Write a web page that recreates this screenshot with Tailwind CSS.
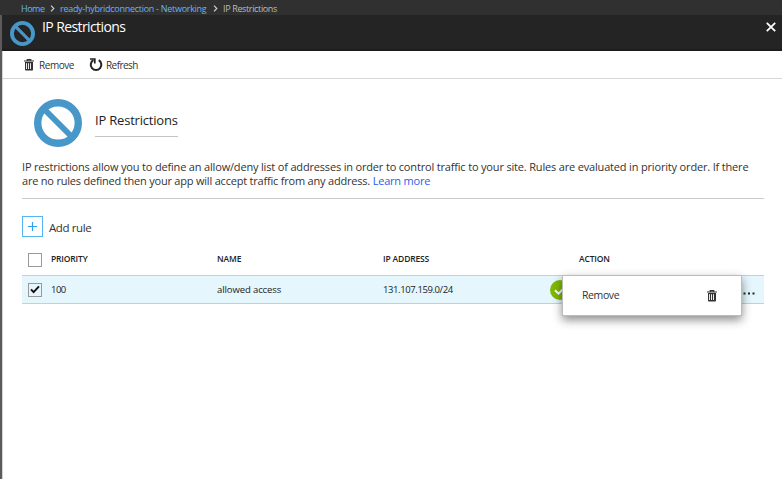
<!DOCTYPE html>
<html lang="en">
<head>
<meta charset="utf-8">
<title>IP Restrictions</title>
<script src="https://cdn.jsdelivr.net/npm/@tailwindcss/browser@4"></script>
</head>
<body class="h-[479px] w-[782px] overflow-hidden bg-white font-['Open_Sans','Noto_Sans',sans-serif] text-[#333] whitespace-nowrap">
<svg class="hidden">
  <symbol id="trash" viewBox="0 0 10 12"><path d="M1 3h8v7.7q0 .8-.8.8H1.8q-.8 0-.8-.8z" fill="#333"/><path d="M0 2h10M3.2 1.8V.6h3.6v1.2" fill="none" stroke="#333" stroke-width="1.1"/><path d="M2.5 4.2v5.8M4.5 4.2v5.8M6.5 4.2v5.8" stroke="#fff" stroke-width=".9"/></symbol>
  <symbol id="block" viewBox="0 0 48 48"><circle cx="24" cy="24" r="20.3" fill="none" stroke="#4797c9" stroke-width="7.4"/><path d="M10 10l28 28" stroke="#4797c9" stroke-width="6"/></symbol>
  <symbol id="chevron" viewBox="0 0 5 7"><path d="M1 .7L3.8 3.5 1 6.3" fill="none" stroke="#ccc" stroke-width="1.2"/></symbol>
</svg>
<div class="flex h-full flex-col">
  <nav class="flex h-[15px] shrink-0 items-center bg-[#303030] pl-[21px] pt-[1px] text-[9px] leading-[15px] text-[#68b3f6]">
    <a class="w-[24px] tracking-[-0.5px]">Home</a>
    <svg class="ml-[5px] h-[7px] w-[5px]"><use href="#chevron"/></svg>
    <a class="ml-[5px] w-[148px] tracking-[-0.28px]">ready-hybridconnection - Networking</a>
    <svg class="ml-[5px] h-[7px] w-[5px]"><use href="#chevron"/></svg>
    <span class="ml-[5px] tracking-[-0.36px] text-[#bbb]">IP Restrictions</span>
  </nav>
  <div class="flex min-h-0 grow border-l-2 border-[#5c5a5c]">
    <div class="flex min-w-0 grow flex-col">
      <header class="flex h-[36px] shrink-0 border-b-2 border-[#1c1c1c] bg-[#242424] pl-[8px] text-white">
        <svg class="mt-[6px] h-[25px] w-[25px]"><use href="#block"/></svg>
        <h1 class="ml-[7px] mt-[2px] text-[14px] font-normal leading-[20px] tracking-[-0.6px]">IP Restrictions</h1>
        <svg class="ml-auto mr-[6px] mt-[7px] h-[10px] w-[10px]" viewBox="0 0 10 10"><path d="M.8 .8l8.4 8.4M9.2 .8L.8 9.2" stroke="white" stroke-width="1.8"/></svg>
      </header>
      <div class="flex min-h-0 grow flex-col border-l border-[#d4d4d4]">
        <div class="flex h-[28px] shrink-0 items-center border-b border-[#d6d6d6] pl-[21px] text-[10px]">
          <svg class="h-[12px] w-[10px]"><use href="#trash"/></svg>
          <span class="ml-[5px] mt-[2px] w-[35px] tracking-[-0.45px]">Remove</span>
          <svg class="ml-[15px] h-[14px] w-[14px]" viewBox="0 0 14 14"><path d="M9.7 2.2A5.3 5.3 0 1 1 4.4 2.2" fill="none" stroke="#222" stroke-width="2"/><path d="M1 1h4.8v4.6" fill="none" stroke="#222" stroke-width="1.7"/></svg>
          <span class="ml-[3px] mt-[2px] tracking-[-0.55px]">Refresh</span>
        </div>
        <main class="flex flex-col pl-[19px] pr-[18px]">
          <div class="flex h-[81px] items-start pl-[12px] pt-[20px]">
            <svg class="h-[48px] w-[48px]"><use href="#block"/></svg>
            <h2 class="ml-[13px] mt-[10px] h-[28px] w-[83px] border-b border-[#c4c4c4] text-[13px] font-medium leading-[22px] tracking-[-0.2px] text-[#222]">IP Restrictions</h2>
          </div>
          <p class="h-[39px] border-b border-[#ccc] text-[11px] leading-[14px]"><span class="tracking-[-0.172px]">IP restrictions allow you to define an allow/deny list of addresses in order to control traffic to your site. Rules are evaluated in priority order. If there</span><br><span class="tracking-[-0.205px]">are no rules defined then your app will accept traffic from any address. <a class="text-[#1f60e8]">Learn more</a></span></p>
          <div class="mt-[17px] flex h-[21px]">
            <div class="flex h-[21px] w-[21px] items-center justify-center border border-[#56b4f5]"><svg class="h-[9px] w-[9px]" viewBox="0 0 9 9"><path d="M4.5 0v9M0 4.5h9" stroke="#2f9fee" stroke-width="1.2"/></svg></div>
            <span class="ml-[6px] mt-[3px] text-[11.5px] leading-[18px] tracking-[-0.4px]">Add rule</span>
          </div>
          <div class="flex h-[38px] items-center text-[8.5px] font-semibold tracking-[-0.15px] text-[#222]">
            <span class="ml-[6px] mt-[7px] h-[14px] w-[14px] border border-[#999]"></span>
            <span class="ml-[9px] mt-[6px] w-[166px]">PRIORITY</span>
            <span class="mt-[6px] w-[166px]">NAME</span>
            <span class="mt-[6px] w-[196px]">IP ADDRESS</span>
            <span class="mt-[6px]">ACTION</span>
          </div>
          <div class="relative flex h-[29px] items-center border-y border-[#c3d1d5] bg-[#e5f6fc] text-[9.5px] font-medium text-[#222]">
            <span class="ml-[6px] flex h-[14px] w-[14px] items-center justify-center border border-[#999]"><svg class="h-[9px] w-[10px]" viewBox="0 0 10 9"><path d="M1 4.4l2.6 2.8L9 1.3" fill="none" stroke="#111" stroke-width="1.9"/></svg></span>
            <span class="ml-[9px] mt-[2px] w-[166px] tracking-[-0.5px]">100</span>
            <span class="mt-[2px] w-[166px] tracking-[-0.1px]">allowed access</span>
            <span class="mt-[2px] w-[167px] tracking-[-0.4px]">131.107.159.0/24</span>
            <svg class="h-[20px] w-[20px]" viewBox="0 0 20 20"><circle cx="10" cy="10" r="10" fill="#7fb900"/><path d="M5 10.2l3.5 3.4L14 8" fill="none" stroke="white" stroke-width="2"/></svg>
            <svg class="ml-auto mr-[9px] mt-[8px] h-[3px] w-[12px]" viewBox="0 0 12 3"><path d="M.5.5h2v2h-2zM5 .5h2v2H5zM9.5.5h2v2h-2z" fill="#222"/></svg>
            <div class="absolute left-[540px] top-[-1px] flex h-[41px] w-[180px] items-center border border-[#bbb] bg-white pl-[19px] text-[10.5px] font-normal text-[#333] shadow-[0_4px_9px_rgba(0,0,0,0.45)]">
              <span class="tracking-[-0.4px]">Remove</span>
              <svg class="ml-auto mr-[24px] h-[12px] w-[10px]"><use href="#trash"/></svg>
            </div>
          </div>
        </main>
      </div>
    </div>
  </div>
</div>
</body>
</html>
